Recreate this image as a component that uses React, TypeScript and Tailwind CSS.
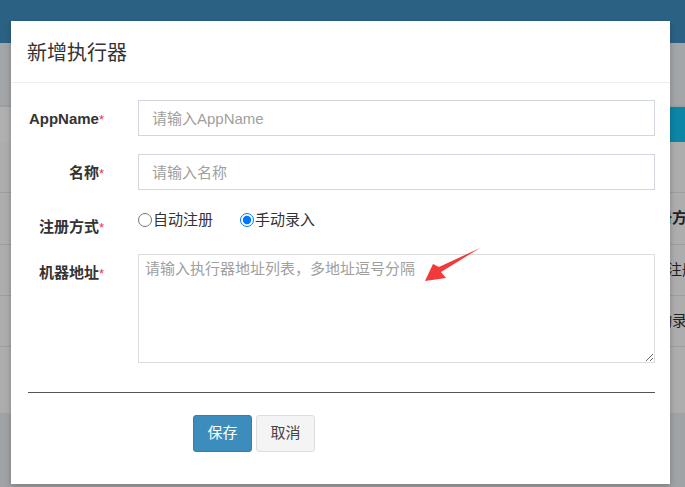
export default function App() {
  return (
    <div className="relative w-[685px] h-[487px] overflow-hidden bg-[#a0a3a6] font-['Liberation_Sans','Noto_Sans_CJK_SC',sans-serif]">
      {/* dimmed page behind the dialog */}
      <div className="h-[43px] bg-[#2b6284]" />
      <div className="h-[62px] bg-[#a3a6a9]" />
      <div className="h-[37px] flex border-t-[2px] border-[#9c9fa2]">
        <div className="flex-1 bg-[#b0b0b0]" />
        <div className="w-[90px] bg-[#0b86a6]" />
      </div>
      <div className="bg-[#adadad] text-[15px] text-[#222]">
        <div className="h-[51px] border-b border-[#9e9e9e]" />
        <div className="h-[52px] border-b border-[#9e9e9e] flex items-center pl-[642px] font-bold whitespace-nowrap">注册方式</div>
        <div className="h-[51px] border-b border-[#9e9e9e] flex items-center pl-[637px] whitespace-nowrap">自动注册</div>
        <div className="h-[51px] border-b border-[#9e9e9e] flex items-center pl-[642px] whitespace-nowrap">手动录入</div>
        <div className="h-[66px]" />
      </div>

      {/* dialog */}
      <div className="absolute left-[11px] top-[21px] w-[659px] h-[463px] bg-white shadow-[0_2px_6px_rgba(0,0,0,0.25)]">
        <div className="h-[62px] border-b border-[#eeeeee] flex items-center pl-[16px] pt-[2px] text-[20px] text-[#333]">
          新增执行器
        </div>

        <div className="pt-[17px] px-[15px]">
          {/* AppName */}
          <div className="flex mb-[18px]">
            <label className="w-[78px] shrink-0 text-right pt-[8px] leading-[21px] text-[15px] font-bold text-[#333] whitespace-nowrap">
              AppName<span className="text-[13px] text-[#e33] font-normal">*</span>
            </label>
            <input
              className="ml-[34px] flex-1 h-[36px] border border-[#d2d6de] px-[13px] text-[15px] text-[#555] outline-none placeholder:text-[#a0a0a0]"
              placeholder="请输入AppName"
            />
          </div>

          {/* 名称 */}
          <div className="flex mb-[18px]">
            <label className="w-[78px] shrink-0 text-right pt-[8px] leading-[21px] text-[15px] font-bold text-[#333] whitespace-nowrap">
              名称<span className="text-[13px] text-[#e33] font-normal">*</span>
            </label>
            <input
              className="ml-[34px] flex-1 h-[36px] border border-[#d2d6de] px-[13px] text-[15px] text-[#555] outline-none placeholder:text-[#a0a0a0]"
              placeholder="请输入名称"
            />
          </div>

          {/* 注册方式 */}
          <div className="flex mb-[18px] h-[28px]">
            <label className="w-[78px] shrink-0 text-right pt-[8px] leading-[21px] text-[15px] font-bold text-[#333] whitespace-nowrap">
              注册方式<span className="text-[13px] text-[#e33] font-normal">*</span>
            </label>
            <div className="ml-[34px] flex items-start pt-[1px] leading-[21px] text-[15px] text-[#333]">
              <label className="flex items-center">
                <input type="radio" name="addressType" className="m-0 w-[14px] h-[14px]" />
                <span className="ml-[1px]">自动注册</span>
              </label>
              <label className="flex items-center ml-[27px]">
                <input type="radio" name="addressType" defaultChecked className="m-0 w-[14px] h-[14px]" />
                <span className="ml-[1px]">手动录入</span>
              </label>
            </div>
          </div>

          {/* 机器地址 */}
          <div className="flex">
            <label className="w-[78px] shrink-0 text-right pt-[8px] leading-[21px] text-[15px] font-bold text-[#333] whitespace-nowrap">
              机器地址<span className="text-[13px] text-[#e33] font-normal">*</span>
            </label>
            <textarea
              className="ml-[34px] flex-1 h-[109px] border border-[#dddddd] px-[6px] py-[3px] leading-[21px] text-[15px] text-[#555] outline-none placeholder:text-[#a0a0a0]"
              placeholder="请输入执行器地址列表，多地址逗号分隔"
            />
          </div>

          <div className="mt-[29px] ml-[2px] h-px bg-[#555]" />

          <div className="mt-[22px] ml-[167px] flex gap-[4px]">
            <button className="w-[59px] h-[37px] rounded-[3px] border border-[#367fa9] bg-[#3c8dbc] text-[15px] text-white">
              保存
            </button>
            <button className="w-[59px] h-[37px] rounded-[3px] border border-[#dddddd] bg-[#f4f4f4] text-[15px] text-[#444]">
              取消
            </button>
          </div>
        </div>
      </div>

      {/* red annotation arrow */}
      <svg className="absolute left-[420px] top-[244px] w-[66px] h-[42px]" viewBox="0 0 66 42">
        <polygon points="60,4 19,23 13,20 5,37 26,34 21,28" fill="#f23a3a" />
      </svg>
    </div>
  );
}
